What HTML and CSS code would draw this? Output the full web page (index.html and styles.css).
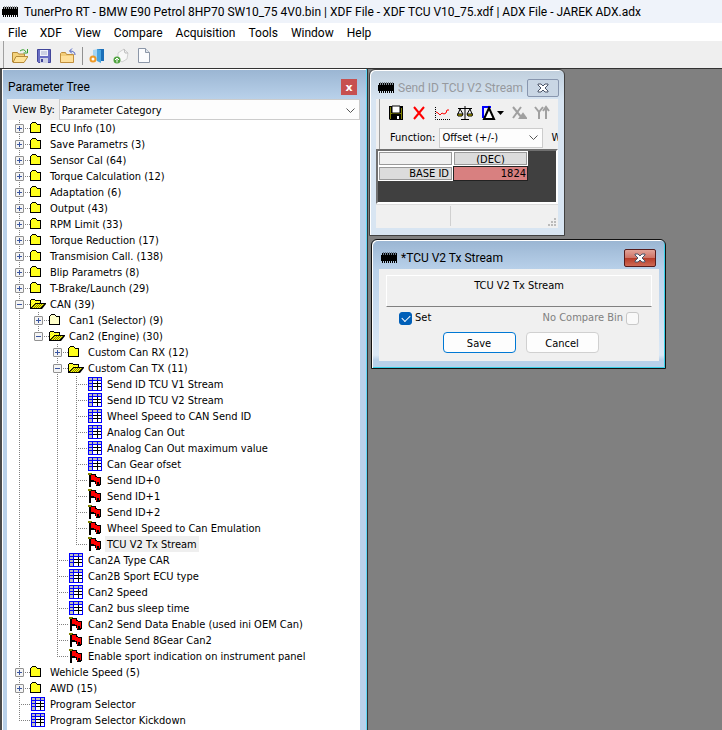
FILE: index.html
```html
<!DOCTYPE html>
<html lang="en">
<head>
<meta charset="utf-8">
<title>TunerPro RT</title>
<link rel="stylesheet" href="styles.css">
</head>
<body>
<svg class="sprite" aria-hidden="true">
  <symbol id="chip" viewBox="0 0 16 12"><path d="M0 3h16v6H0zM1 1h1v10H1zM3 1h1v10H3zM5 1h1v10H5zM7 1h1v10H7zM9 1h1v10H9zM11 1h1v10h-1zM13 1h1v10h-1zM15 1h1v10h-1z" fill="#000"/><path d="M2 0h1v3H2zM4 0h1v3H4zM6 0h1v3H6zM8 0h1v3H8zM10 0h1v3h-1zM12 0h1v3h-1zM14 0h1v3h-1z" fill="#000" opacity=".35"/></symbol>
  <pattern id="dither" width="2" height="2" patternUnits="userSpaceOnUse"><path d="M0 0h2v2H0z" fill="#ff0"/><path d="M0 0h1v1H0zM1 1h1v1H1z" fill="#ffff50"/></pattern>
  <pattern id="olive" width="2" height="2" patternUnits="userSpaceOnUse"><path d="M0 0h2v2H0z" fill="#808000"/><path d="M0 0h1v1H0zM1 1h1v1H1z" fill="#ff0"/></pattern>
  <symbol id="folder" viewBox="0 0 16 12"><path d="M0 2h1V1h1V0h4v1h1v1h4v9H0z" fill="#000"/><path d="M1 2h1V1h4v1h1v1h3v7H1z" fill="#ffff1c"/></symbol>
  <symbol id="pale" viewBox="0 0 16 12"><path d="M0 2h1V1h1V0h4v1h1v1h4v9H0z" fill="#000"/><path d="M1 2h1V1h4v1h1v1h3v7H1z" fill="#ffffc8"/></symbol>
  <symbol id="open" viewBox="0 0 16 12"><path d="M0 11V2h1V1h4v1h6v3h5v1l-4 5z" fill="#000"/><path d="M1 9V2h4v1h5v2H5v1H4v1H3v1H2v1z" fill="url(#dither)"/><path d="M5 6h9v1h-1v1h-1v1h-1v1H2V9h1V8h1V7h1z" fill="url(#olive)"/></symbol>
  <symbol id="table" viewBox="0 0 14 14"><path d="M0 0h14v14H0z" fill="#00f"/><path d="M1 1h12v12H1z" fill="#000"/><path d="M1 1h3v2H1zM5 1h4v2H5zM10 1h3v2h-3zM1 4h3v2H1zM1 7h3v2H1zM1 10h3v3H1z" fill="#c0c0c0"/><path d="M5 4h4v2H5zM10 4h3v2h-3zM5 7h4v2H5zM10 7h3v2h-3zM5 10h4v3H5zM10 10h3v3h-3z" fill="#fff"/><path d="M4.500 1v12M1 3.500h12M1 6.500h3M1 9.500h3M9.500 1v2" fill="none" stroke="#00f"/></symbol>
  <symbol id="flag" viewBox="0 0 14 14"><path d="M0 0h4v2H0z" fill="#808000"/><path d="M1 2h2v12H1zM3 1h5v2h1v1h4v8h-1v1H8v-2H7V9H3z" fill="#000"/><path d="M3 2h4v2h2v1h3v6h-1V9H9v3H8V8H6V7H3z" fill="red"/></symbol>
  <symbol id="chevron" viewBox="0 0 9 6"><path d="M.5.5l4 4 4-4" fill="none" stroke="#555"/></symbol>
  <symbol id="cross" viewBox="0 0 12 10"><path d="M1 1h3l2 2 2-2h3v1L8 5l3 3v1H8L6 7 4 9H1V8l3-3-3-3z" fill="#fff" stroke="#4a5468"/></symbol>
</svg>

<header class="titlebar"><svg class="chip"><use href="#chip"/></svg><h1>TunerPro RT - BMW E90 Petrol 8HP70 SW10_75 4V0.bin | XDF File - XDF TCU V10_75.xdf | ADX File - JAREK ADX.adx</h1></header>
<nav class="menu"><a href="#">File</a><a href="#">XDF</a><a href="#">View</a><a href="#">Compare</a><a href="#">Acquisition</a><a href="#">Tools</a><a href="#">Window</a><a href="#">Help</a></nav>

<div class="toolbar">
  <button aria-label="Open"><svg viewBox="0 0 16 16"><path d="M.5 14V4.500h5l1 1.500h6v3" fill="#f4d27c" stroke="#b58a3a"/><path d="M1 14.500l3-6h12l-4 6z" fill="#ffe39a" stroke="#b58a3a"/><path d="M8 3q4-3 6 1M15.500 1v4h-4" fill="none" stroke="#36a12e"/></svg></button>
  <button aria-label="Save"><svg viewBox="0 0 16 16"><path d="M1.500 1.500h13v13h-12l-1-1z" fill="#6a6fc4" stroke="#41459a"/><path d="M4 2h8v6H4z" fill="#f2f4fb"/><path d="M5 4h6M5 6h6" stroke="#a7b0cc"/><path d="M4 10h8v5H4z" fill="#cfd3e6"/><path d="M5 11h2v3H5z" fill="#41459a"/></svg></button>
  <button aria-label="Close file"><svg viewBox="0 0 16 16"><path d="M.5 14.500V5.500l1-1h4l1 2h7v8z" fill="#f3cd78" stroke="#c08f3e"/><path d="M1 8h12v6H1z" fill="#ffe09a"/><path d="M15 7q0-4-5-4M12 .5L9.500 3 12 5.500" fill="none" stroke="#4a5fc0"/></svg></button>
  <span class="sep"></span>
  <button aria-label="Load definition"><svg viewBox="0 0 16 16"><path d="M4 2l5-1v12l-5-1z" fill="#a5d6f5"/><path d="M8 1h7v12H8z" fill="#1c6fb8"/><path d="M8 1l4 1v13l-4-2z" fill="#4ba5e0"/><circle cx="4" cy="11" r="2.500" fill="#fff" stroke="#ee9a28" stroke-width="2"/></svg></button>
  <button aria-label="Add definition"><svg viewBox="0 0 16 16"><path d="M5 5l6-4 4 4-1 6-5 3-4-3z" fill="#f8f8f8" stroke="#d0d0d0"/><path d="M11 1l1 4 3 0" fill="none" stroke="#bbb"/><circle cx="4" cy="12" r="3.500" fill="#4fa33f"/><path d="M4 14.500v-4M2 12l2-2 2 2" fill="none" stroke="#fff"/></svg></button>
  <button aria-label="New file"><svg viewBox="0 0 16 16"><path d="M1.500.5h7l4 4v10h-11z" fill="#fbfcfe" stroke="#8c97a8"/><path d="M8.500.5v4h4" fill="#dfe5ee" stroke="#8c97a8"/></svg></button>
</div>

<main class="desk">
<section class="panel">
  <header class="panel-title"><h2>Parameter Tree</h2><button class="panel-close" aria-label="Close">x</button></header>
  <div class="viewby"><label for="view">View By:</label><span class="combo"><select id="view"><option>Parameter Category</option></select><svg class="chev"><use href="#chevron"/></svg></span></div>
  <ul class="tree">
    <li><div class="row"><button class="tog plus" aria-label="Expand"></button><svg class="fold"><use href="#folder"/></svg><span>ECU Info (10)</span></div></li>
    <li><div class="row"><button class="tog plus" aria-label="Expand"></button><svg class="fold"><use href="#folder"/></svg><span>Save Parametrs (3)</span></div></li>
    <li><div class="row"><button class="tog plus" aria-label="Expand"></button><svg class="fold"><use href="#folder"/></svg><span>Sensor Cal (64)</span></div></li>
    <li><div class="row"><button class="tog plus" aria-label="Expand"></button><svg class="fold"><use href="#folder"/></svg><span>Torque Calculation (12)</span></div></li>
    <li><div class="row"><button class="tog plus" aria-label="Expand"></button><svg class="fold"><use href="#folder"/></svg><span>Adaptation (6)</span></div></li>
    <li><div class="row"><button class="tog plus" aria-label="Expand"></button><svg class="fold"><use href="#folder"/></svg><span>Output (43)</span></div></li>
    <li><div class="row"><button class="tog plus" aria-label="Expand"></button><svg class="fold"><use href="#folder"/></svg><span>RPM Limit (33)</span></div></li>
    <li><div class="row"><button class="tog plus" aria-label="Expand"></button><svg class="fold"><use href="#folder"/></svg><span>Torque Reduction (17)</span></div></li>
    <li><div class="row"><button class="tog plus" aria-label="Expand"></button><svg class="fold"><use href="#folder"/></svg><span>Transmision Call. (138)</span></div></li>
    <li><div class="row"><button class="tog plus" aria-label="Expand"></button><svg class="fold"><use href="#folder"/></svg><span>Blip Parametrs (8)</span></div></li>
    <li><div class="row"><button class="tog plus" aria-label="Expand"></button><svg class="fold"><use href="#folder"/></svg><span>T-Brake/Launch (29)</span></div></li>
    <li><div class="row"><button class="tog" aria-label="Collapse"></button><svg class="fold"><use href="#open"/></svg><span>CAN (39)</span></div>
      <ul>
        <li><div class="row"><button class="tog plus" aria-label="Expand"></button><svg class="fold"><use href="#pale"/></svg><span>Can1 (Selector) (9)</span></div></li>
        <li><div class="row"><button class="tog" aria-label="Collapse"></button><svg class="fold"><use href="#open"/></svg><span>Can2 (Engine) (30)</span></div>
          <ul>
            <li><div class="row"><button class="tog plus" aria-label="Expand"></button><svg class="fold"><use href="#folder"/></svg><span>Custom Can RX (12)</span></div></li>
            <li><div class="row"><button class="tog" aria-label="Collapse"></button><svg class="fold"><use href="#open"/></svg><span>Custom Can TX (11)</span></div>
              <ul>
                <li><div class="row"><svg class="leaf"><use href="#table"/></svg><span>Send ID TCU V1 Stream</span></div></li>
                <li><div class="row"><svg class="leaf"><use href="#table"/></svg><span>Send ID TCU V2 Stream</span></div></li>
                <li><div class="row"><svg class="leaf"><use href="#table"/></svg><span>Wheel Speed to CAN Send ID</span></div></li>
                <li><div class="row"><svg class="leaf"><use href="#table"/></svg><span>Analog Can Out</span></div></li>
                <li><div class="row"><svg class="leaf"><use href="#table"/></svg><span>Analog Can Out maximum value</span></div></li>
                <li><div class="row"><svg class="leaf"><use href="#table"/></svg><span>Can Gear ofset</span></div></li>
                <li><div class="row"><svg class="leaf"><use href="#flag"/></svg><span>Send ID+0</span></div></li>
                <li><div class="row"><svg class="leaf"><use href="#flag"/></svg><span>Send ID+1</span></div></li>
                <li><div class="row"><svg class="leaf"><use href="#flag"/></svg><span>Send ID+2</span></div></li>
                <li><div class="row"><svg class="leaf"><use href="#flag"/></svg><span>Wheel Speed to Can Emulation</span></div></li>
                <li><div class="row"><svg class="leaf"><use href="#flag"/></svg><span class="selected">TCU V2 Tx Stream</span></div></li>
              </ul>
            </li>
            <li><div class="row"><svg class="leaf"><use href="#table"/></svg><span>Can2A Type CAR</span></div></li>
            <li><div class="row"><svg class="leaf"><use href="#table"/></svg><span>Can2B Sport ECU type</span></div></li>
            <li><div class="row"><svg class="leaf"><use href="#table"/></svg><span>Can2 Speed</span></div></li>
            <li><div class="row"><svg class="leaf"><use href="#table"/></svg><span>Can2 bus sleep time</span></div></li>
            <li><div class="row"><svg class="leaf"><use href="#flag"/></svg><span>Can2 Send Data Enable (used ini OEM Can)</span></div></li>
            <li><div class="row"><svg class="leaf"><use href="#flag"/></svg><span>Enable Send 8Gear Can2</span></div></li>
            <li><div class="row"><svg class="leaf"><use href="#flag"/></svg><span>Enable sport indication on instrument panel</span></div></li>
          </ul>
        </li>
      </ul>
    </li>
    <li><div class="row"><button class="tog plus" aria-label="Expand"></button><svg class="fold"><use href="#folder"/></svg><span>Wehicle Speed (5)</span></div></li>
    <li><div class="row"><button class="tog plus" aria-label="Expand"></button><svg class="fold"><use href="#folder"/></svg><span>AWD (15)</span></div></li>
    <li><div class="row"><svg class="leaf"><use href="#table"/></svg><span>Program Selector</span></div></li>
    <li><div class="row"><svg class="leaf"><use href="#table"/></svg><span>Program Selector Kickdown</span></div></li>
  </ul>
</section>

<div class="canvas">
<section class="win stream">
  <header class="win-title"><svg class="chip"><use href="#chip"/></svg><h2>Send ID TCU V2 Stream</h2><button class="win-close" aria-label="Close"><svg><use href="#cross"/></svg></button></header>
  <div class="client">
    <div class="tools">
      <button aria-label="Save"><svg viewBox="0 0 16 16"><path d="M1 1h14v14H2l-1-1z"/><path d="M2 2h1v12H2zM13 3h1v11h-1zM3 8h10v1H3z" fill="#808000"/><path d="M4 1h8v7H4z" fill="#fff" stroke="#000"/><path d="M9 11h2v3H9z" fill="#fff"/></svg></button>
      <button aria-label="Discard"><svg viewBox="0 0 16 16"><path d="M3 2l10 12M13 2L3 14" stroke="red" stroke-width="2"/></svg></button>
      <button aria-label="Graph"><svg viewBox="0 0 16 16"><path d="M1.500 2v12.500H16" fill="none" stroke="#000" stroke-dasharray="1 1"/><path d="M2 7l2 1 2 2 2-2 2 1 2-1 1-3h2" fill="none" stroke="red"/></svg></button>
      <button aria-label="Compare"><svg viewBox="0 0 16 16"><path d="M8 1v13M4 14.500h8M1 3.500h14M3 4L1 9M3 4l3 5M13 4l-3 5M13 4l2 5" fill="none" stroke="#000"/><path d="M0 9h6l-1 2H1zM10 9h6l-1 2h-4z" fill="#e8d800" stroke="#000"/></svg></button>
      <button class="wide" aria-label="Difference"><svg viewBox="0 0 24 16"><path d="M11 2H3v10h3" fill="none" stroke="#00f" stroke-width="2"/><path d="M9 3L4 14h10z" fill="#fff" stroke="#000" stroke-width="2"/><path d="M17 6h7l-3.500 4z"/></svg></button>
      <button aria-label="X axis" disabled><svg viewBox="0 0 16 16"><path d="M2 2l9 11M10 2L2 13M9 13h6l-3-4z" fill="#a0a0a0" stroke="#a0a0a0" stroke-width="2"/></svg></button>
      <button aria-label="Y axis" disabled><svg viewBox="0 0 16 16"><path d="M1 2l4 5 4-5M5 7v7M12 3v11M9 6l3-4 3 4" fill="none" stroke="#a0a0a0" stroke-width="2"/></svg></button>
    </div>
    <div class="tools func"><label for="fn">Function:</label><span class="combo"><select id="fn"><option>Offset (+/-)</option></select><svg class="chev"><use href="#chevron"/></svg></span><span class="cut">W</span></div>
    <div class="sheet"><table><tr><td></td><th scope="col">(DEC)</th></tr><tr><th scope="row">BASE ID</th><td class="val">1824</td></tr></table></div>
    <footer class="status"><span></span><svg class="grip" viewBox="0 0 8 8"><path d="M6 0h2v2H6zM3 3h2v2H3zM6 3h2v2H6zM0 6h2v2H0zM3 6h2v2H3zM6 6h2v2H6z" fill="#bbb"/></svg></footer>
  </div>
</section>

<section class="win active">
  <header class="win-title"><svg class="chip"><use href="#chip"/></svg><h2>*TCU V2 Tx Stream</h2><button class="win-close" aria-label="Close"><svg><use href="#cross"/></svg></button></header>
  <form class="client">
    <p class="name">TCU V2 Tx Stream</p>
    <div class="checks"><label><input type="checkbox" checked>Set</label><label class="off">No Compare Bin<input type="checkbox" disabled></label></div>
    <div class="actions"><button type="button" class="primary">Save</button><button type="button">Cancel</button></div>
  </form>
</section>
</div>
</main>
</body>
</html>
```
FILE: styles.css
```css
* { box-sizing: border-box; }
body { margin: 0; min-height: 100vh; display: flex; flex-direction: column; background: #808080; color: #000; font: 11px/16px "DejaVu Sans Condensed", "Noto Sans", sans-serif; overflow: hidden; }
h1, h2, p, ul { margin: 0; padding: 0; font: inherit; list-style: none; }
button, select, input { font: inherit; color: inherit; margin: 0; padding: 0; border: 0; background: none; }
svg { display: block; flex: none; }
.sprite { position: absolute; width: 0; height: 0; }
.chip { width: 16px; height: 12px; }

.titlebar, .menu, .panel-title, .win-title { font-family: Roboto, sans-serif; font-size: 12px; white-space: nowrap; }
.titlebar { display: flex; align-items: center; gap: 6px; height: 23px; padding: 0 2px; background: #eff3fa; }
.menu { display: flex; gap: 13px; height: 18px; padding: 0 8px; background: #fff; line-height: 20px; }
.menu a { color: inherit; text-decoration: none; }
.toolbar { display: flex; align-items: center; gap: 8px; height: 27px; padding: 2px 0 0 8px; margin-left: 3px; border-left: 1px solid #a0a0a0; background: #efefef; box-shadow: -3px 0 #efefef; }
.toolbar svg { width: 16px; height: 16px; }
.sep { width: 1px; height: 18px; margin: 0 -2px; background: #909090; }

.desk { flex: 1; display: flex; min-height: 0; border-top: 1px solid #333; }
.panel { flex: none; width: 368px; display: flex; flex-direction: column; padding: 0 7px 0 5px; border-left: 2px solid #4a4a4a; border-right: 1px solid #333; background: linear-gradient(#9ab5d2, #b9d1ea 30px); box-shadow: inset -1px 0 #5fd8f5, inset 1px 1px #fff; }
.panel-title { display: flex; align-items: center; justify-content: space-between; height: 30px; padding: 6px 3px 0 1px; }
.panel-close { width: 16px; height: 16px; background: #c75050; color: #fff; font: bold 11px/13px "DejaVu Sans", sans-serif; }
.viewby { display: flex; height: 21px; padding-left: 6px; background: #f0f0f0; line-height: 21px; gap: 4px; }
.viewby .combo { flex: 1; }
.combo { display: grid; align-items: center; border: 1px solid #ccc; background: #fdfdfd; }
.combo > * { grid-area: 1 / 1; }
.combo select { appearance: none; width: 100%; padding-left: 2px; outline: 0; }
.chev { width: 9px; height: 6px; justify-self: end; margin-right: 4px; pointer-events: none; }

.tree { flex: 1; min-height: 0; padding-left: 8px; background: #fff; overflow: hidden; white-space: nowrap; }
.tree ul { margin-left: 19px; }
.tree li { background: repeating-linear-gradient(#808080 0 1px, transparent 1px 2px) 4px 0 / 1px 100% no-repeat; }
.tree li:last-child { background-size: 1px 8px; }
.row { display: flex; align-items: center; height: 16px; background: repeating-linear-gradient(90deg, #808080 0 1px, transparent 1px 2px) 4px 8px / 12px 1px no-repeat; }
.tog { width: 9px; height: 9px; border: 1px solid #919191; border-radius: 1px; background: linear-gradient(#3a55a0, #3a55a0) 1px 3px / 5px 1px no-repeat #f4f4f4; }
.tog.plus { background: linear-gradient(#3a55a0, #3a55a0) 1px 3px / 5px 1px no-repeat, linear-gradient(#3a55a0, #3a55a0) 3px 1px / 1px 5px no-repeat, #f4f4f4; }
.fold { width: 16px; height: 12px; margin: 0 2px 0 6px; }
.leaf { width: 14px; height: 14px; margin: 0 3px 0 16px; }
.row span { height: 16px; padding: 0 2px; line-height: 18px; }
.selected { background: #efefef; }

.canvas { flex: 1; position: relative; }
.win { position: absolute; border: 1px solid #404040; border-radius: 6px 6px 0 0; padding: 0 6px 7px; box-shadow: inset 1px 1px #fff; }
.stream { left: 1px; top: 0; width: 196px; background: linear-gradient(#c0cfdd, #d8e5f2 30px); }
.active { left: 3px; top: 170px; width: 295px; padding-left: 7px; border-color: #111; background: linear-gradient(#9ab5d2, #b9d1ea 30px, #dce9f6 115px, #b9d1ea 120px); box-shadow: inset 1px 1px #fff, inset -1px -1px #37d0e8; }
.win-title { display: flex; align-items: center; gap: 4px; height: 29px; padding: 6px 3px 0 2px; }
.stream h2 { color: #96999e; }
.win-close { display: grid; place-items: center; flex: none; width: 32px; height: 18px; margin-left: auto; border: 1px solid #8896ae; border-radius: 2px; background: #c9d6e4; }
.stream .win-title { padding-right: 2px; }
.win-close svg { width: 12px; height: 10px; }
.active .win-close { border-color: #571c1c; background: linear-gradient(#e2a398, #cf7467 48%, #b53a27 50%, #cf6a55); }
.client { background: #f0f0f0; overflow: hidden; }
.tools { display: flex; align-items: center; gap: 7px; height: 27px; margin-left: 3px; padding-left: 8px; border-left: 1px solid #a0a0a0; }
.tools svg { width: 16px; height: 16px; }
.tools .wide svg { width: 24px; }
.func { height: 23px; padding-left: 10px; gap: 4px; white-space: nowrap; }
.func .combo { flex: none; width: 104px; height: 20px; }
.func .chev { width: 9px; height: 6px; }
.cut { margin-left: 4px; }
.sheet { height: 55px; border: 2px solid #707070; border-right-color: #fff; border-bottom-color: #fff; background: #404040; }
table { border-collapse: separate; border-spacing: 0; table-layout: fixed; width: 150px; line-height: 11px; }
td, th { height: 15px; padding: 0 3px; border: 1px solid #fff; outline: 1px solid #999; outline-offset: -2px; background: #dcdcdc; font-weight: normal; text-align: right; }
tr:first-child td { background: #f0f0f0; }
th[scope="col"] { padding-top: 2px; text-align: center; }
td.val { border-color: #222; outline: 0; background: #d88080; padding-right: 1px; }
.status { display: flex; justify-content: space-between; align-items: flex-end; height: 24px; padding: 2px; border-top: 1px solid #dcdcdc; }
.status span { width: 73px; height: 20px; border-right: 1px solid #d0d0d0; }
.grip { width: 8px; height: 8px; }
.active .client { padding: 6px 7px 8px; }
.name { height: 32px; padding-top: 2px; border: 1px solid #fff; border-bottom-color: #808080; text-align: center; }
.checks { display: flex; justify-content: space-between; padding: 3px 13px 0 13px; line-height: 18px; }
.checks label { display: flex; align-items: center; gap: 3px; height: 16px; }
.checks input { appearance: none; width: 13px; height: 13px; border: 1px solid #c8c8c8; border-radius: 3px; background: #f9f9f9; }
.checks input:checked { border-color: #005fb8; background: #005fb8; display: grid; place-items: center; }
.checks input:checked::before { content: ""; width: 7px; height: 4px; border: solid #fff; border-width: 0 0 1px 1px; transform: translateY(-1px) rotate(-45deg); }
.off { color: #808080; }
.actions { display: flex; justify-content: center; gap: 10px; padding: 6px 0 0 3px; }
.actions button { width: 73px; height: 21px; padding-top: 2px; border: 1px solid #d0d0d0; border-radius: 4px; background: #fdfdfd; }
.actions .primary { border-color: #0078d4; }
```
